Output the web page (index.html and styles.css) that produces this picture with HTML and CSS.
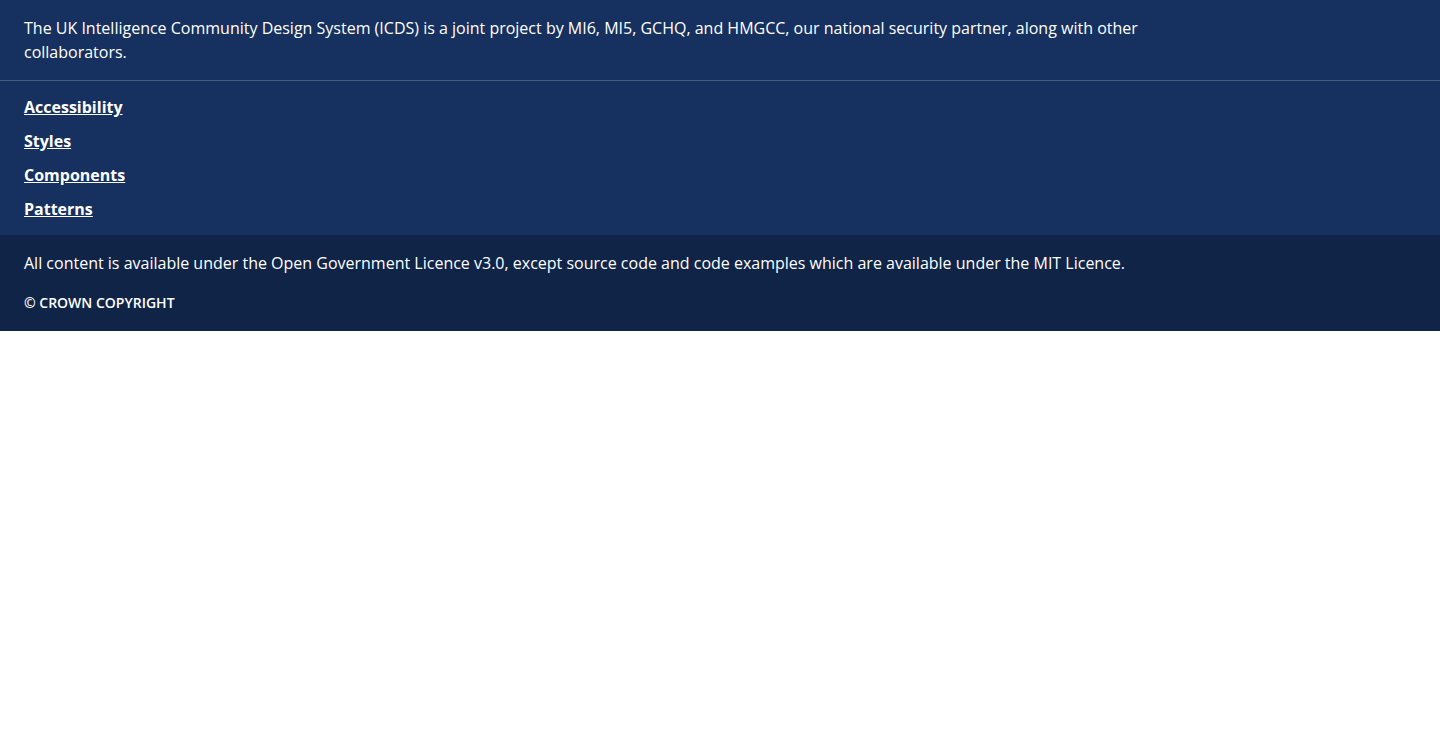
FILE: index.html
```
<!DOCTYPE html>
<html lang="en">
<head>
<meta charset="utf-8">
<title>Intelligence Community Design System</title>
<link rel="stylesheet" href="styles.css">
</head>
<body>
<footer class="footer">
  <div class="footer-description">
    <p class="footer-text">The UK Intelligence Community Design System (ICDS) is a joint project by MI6, MI5, GCHQ, and HMGCC, our national security partner, along with other collaborators.</p>
  </div>
  <nav class="footer-nav" aria-label="Footer">
    <ul class="footer-links">
      <li><a class="footer-link" href="#">Accessibility</a></li>
      <li><a class="footer-link" href="#">Styles</a></li>
      <li><a class="footer-link" href="#">Components</a></li>
      <li><a class="footer-link" href="#">Patterns</a></li>
    </ul>
  </nav>
  <div class="footer-legal">
    <p class="footer-text">All content is available under the Open Government Licence v3.0, except source code and code examples which are available under the MIT Licence.</p>
    <p class="footer-copyright">© Crown Copyright</p>
  </div>
</footer>
</body>
</html>
```
FILE: styles.css
```
body {
  margin: 0;
  background: #fff;
  font-family: "Open Sans", sans-serif;
  font-size: 16px;
  line-height: 24px;
}

.footer {
  background: #163060;
  color: #fff;
}

.footer-description {
  padding: 16px 24px;
  border-bottom: 1px solid #4a5a7d;
}

.footer-text {
  margin: 0;
  max-width: 1144px;
}

.footer-nav {
  padding: 14px 24px;
}

.footer-links {
  display: flex;
  flex-direction: column;
  align-items: flex-start;
  gap: 10px;
  margin: 0;
  padding: 0;
  list-style: none;
}

.footer-link {
  color: #fff;
  font-weight: 700;
}

.footer-legal {
  display: flex;
  flex-direction: column;
  gap: 16px;
  padding: 16px 24px;
  background: #102448;
}

.footer-copyright {
  margin: 0;
  font-size: 14px;
  font-weight: 600;
  text-transform: uppercase;
}
```
